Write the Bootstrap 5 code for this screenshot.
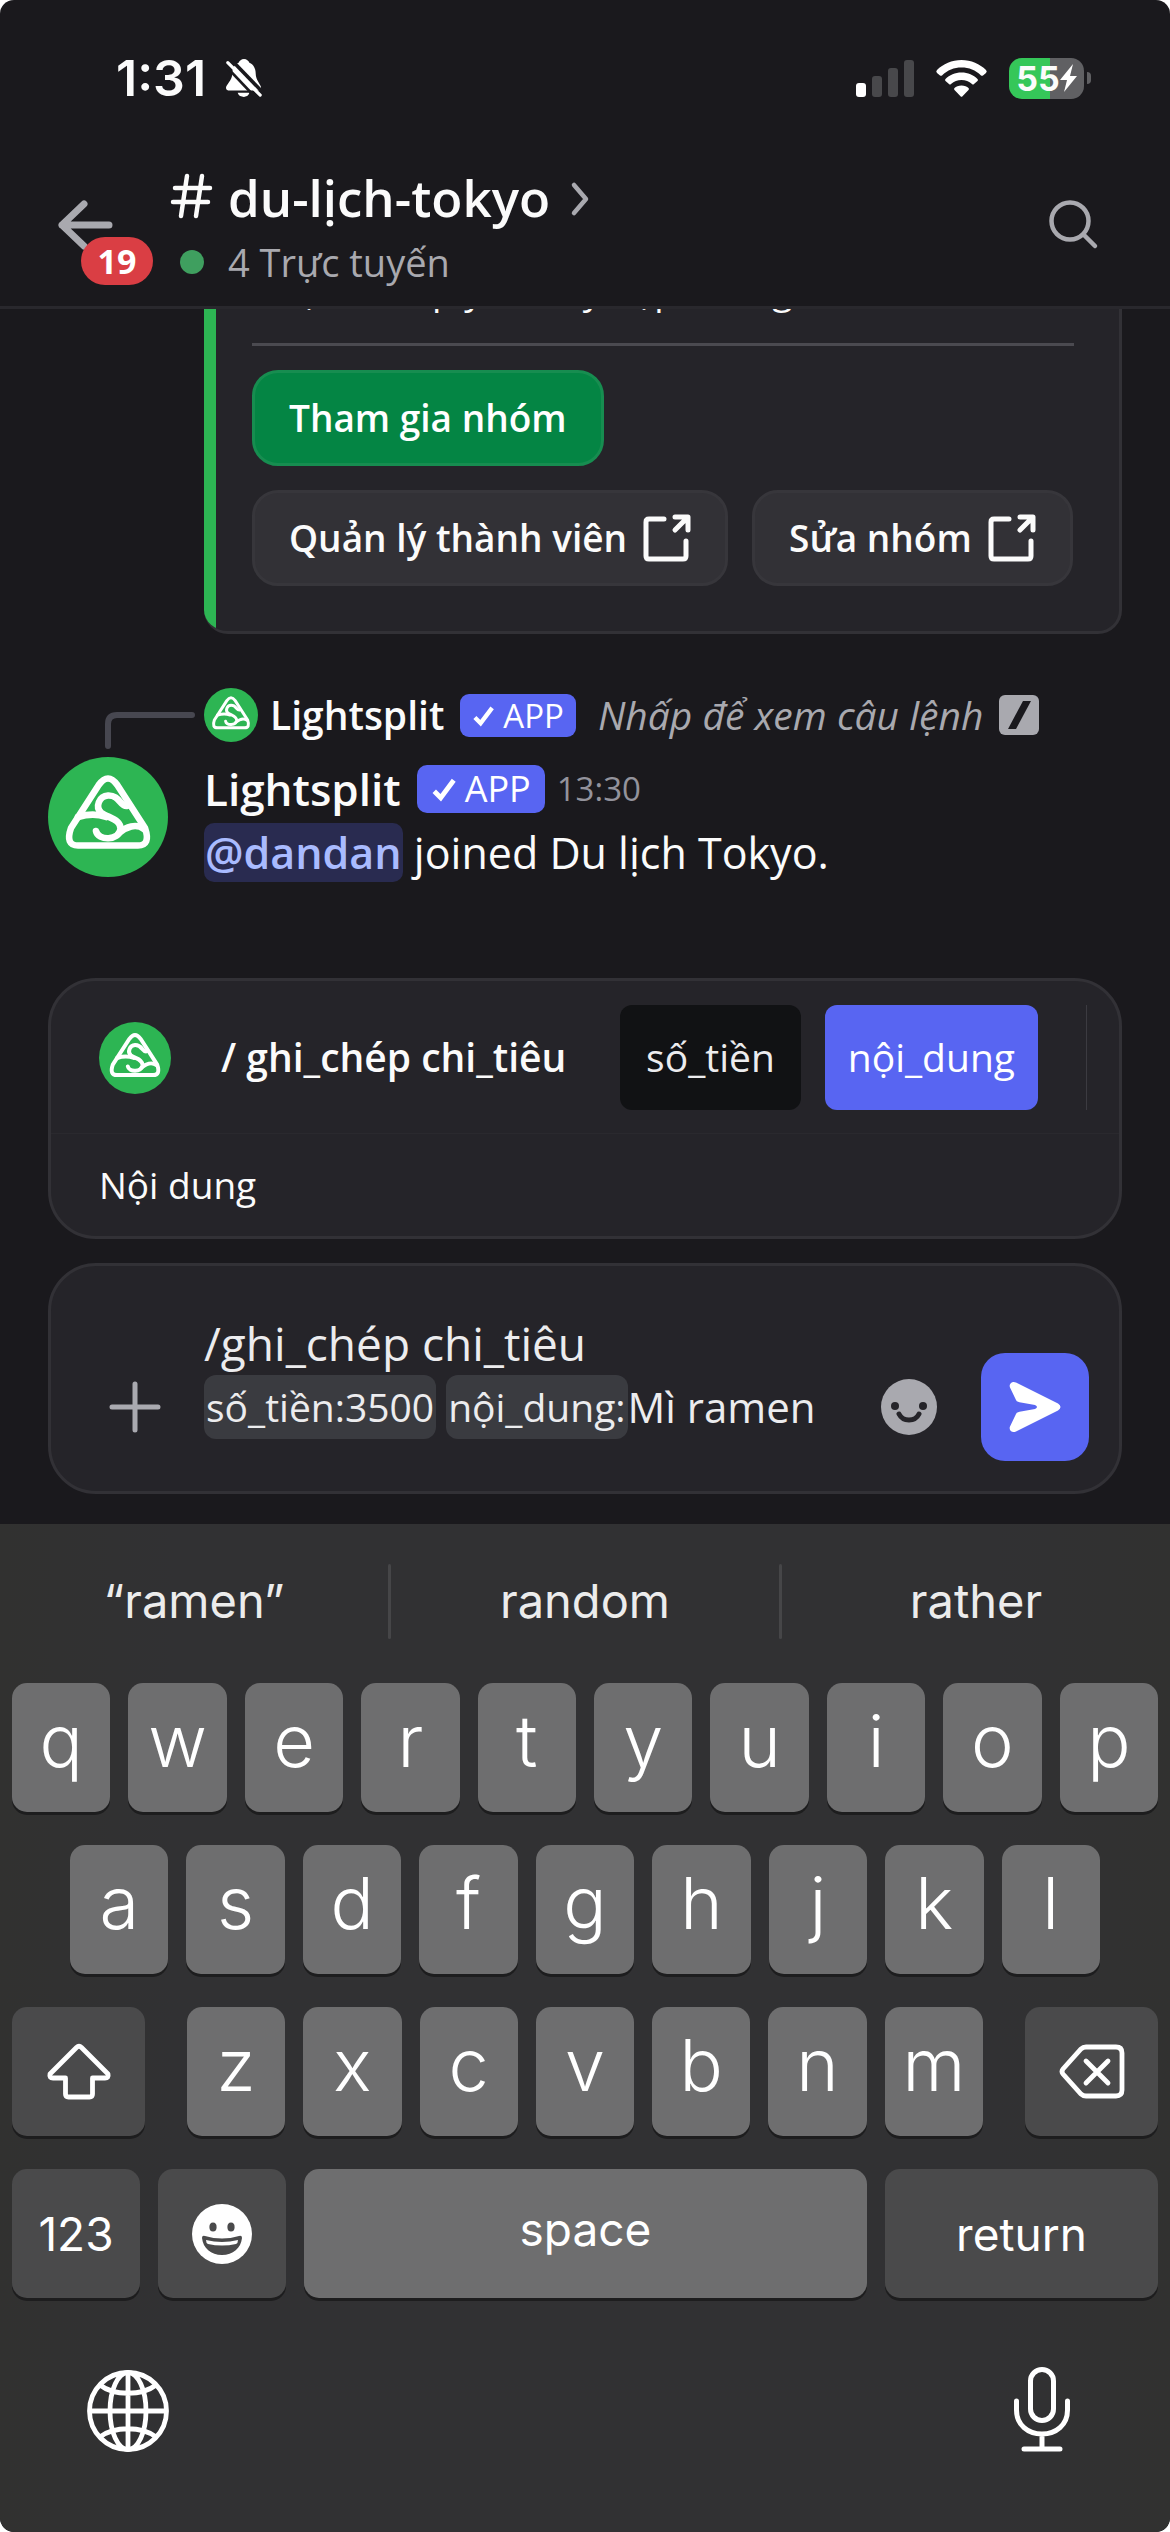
<!DOCTYPE html>
<html lang="vi">
<head>
<meta charset="utf-8">
<meta name="viewport" content="width=device-width, initial-scale=1">
<title>#du-lịch-tokyo</title>
<link href="https://cdn.jsdelivr.net/npm/bootstrap@5.3.0/dist/css/bootstrap.min.css" rel="stylesheet">
<style>
  :root { --chat: "Open Sans", "Noto Sans", sans-serif; --sys: Inter, Roboto, sans-serif; --panel: #252429; --blurple: #5865f2; --green: #2db553; --muted: #a9a9af; }
  body { background: #fff; font-family: var(--chat); color: #fbfbfb; }
  svg { display: block; flex: none; overflow: visible; }
  button { font-family: inherit; }
  .phone { background: #1a191d; border-radius: 14px; }
  .bare { background: none; border: 0; padding: 0; color: inherit; }

  /* status bar */
  .status { height: 156px; padding: 0 79px 0 116px; font-family: var(--sys); }
  .clock { font-size: 50px; font-weight: 600; line-height: 60px; }
  .wifi { margin: 0 22px; }
  .battery { width: 75px; height: 41px; border-radius: 13px; background: linear-gradient(90deg, #35c759 55%, #606063 55%); font-size: 34px; line-height: 41px; font-weight: 700; }
  .nub { width: 4px; height: 12px; border-radius: 0 4px 4px 0; background: #606063; margin-left: 3px; }

  /* channel header */
  .topbar { padding: 5px 73px 15px 58px; border-bottom: 3px solid #29282d; }
  .unread { top: 38px; left: 23px; width: 72px; height: 48px; border-radius: 24px; background: #da3e44; font-size: 34px; font-weight: 700; line-height: 48px; }
  .heading { margin-left: 60px; }
  .symbol-col { width: 56px; }
  .channel { font-size: 51px; line-height: 72px; font-weight: 600; margin: 0; }
  .chevron { margin-left: 22px; }
  .online { font-size: 38px; line-height: 58px; color: var(--muted); }
  .dot { width: 24px; height: 24px; border-radius: 50%; background: #3f9f5f; margin-left: 8px; }

  /* conversation */
  .chat { flex: 1 1 0; min-height: 0; padding: 0 48px 93px; }
  .embed { flex: none; margin: 0 0 54px 156px; border: 3px solid #323136; border-left: 0; border-radius: 24px; background: var(--panel); }
  .stripe { width: 12px; background: var(--green); }
  .embed-body { padding: 36px 45px 45px 36px; font-size: 37px; line-height: 50px; }
  .rule { height: 3px; margin: 28px 0 24px; background: #4b4a50; }
  .act { height: 96px; padding: 0 34px; border-radius: 26px; border: 3px solid #37363b; background: #323136; color: #fbfbfb; font-size: 37px; font-weight: 600; line-height: 50px; }
  .act-go { background: #048544; border-color: #178d50; color: #fff; }
  .reply { height: 54px; margin-left: 54px; margin-bottom: 15px; font-size: 39px; line-height: 54px; }
  .spine { margin-right: 6px; }
  .who { font-weight: 600; }
  .hint { color: var(--muted); margin: 0 16px 0 22px; }
  .tag { background: var(--blurple); border-radius: 9px; color: #fff; font-size: 33px; font-weight: 500; line-height: 43px; padding: 0 12px; gap: 8px; }
  .tag-lg { border-radius: 10px; font-size: 36px; line-height: 48px; padding: 0 14px; }
  .msg { gap: 36px; font-size: 43px; line-height: 64px; }
  .msg .who { font-size: 44px; }
  .time { font-size: 33px; color: #93939c; }
  .at { background: #292b50; color: #a9bbff; border-radius: 10px; font-weight: 600; text-decoration: none; padding: 0 1px; }

  /* command helper and composer */
  .panel { margin: 0 48px; border: 3px solid #323136; border-radius: 48px; background: var(--panel); }
  .helper { margin-bottom: 24px; font-size: 37px; }
  .helper-top { padding: 24px 32px 23px 48px; border-bottom: 1px solid #2a292e; }
  .cmd { font-size: 39px; font-weight: 600; margin-left: 50px; }
  .opt { height: 105px; border: 0; border-radius: 12px; padding: 0 26px; background: #111214; color: #ececee; font-size: 39px; font-weight: 500; }
  .opt-on { background: var(--blurple); color: #fff; padding: 0 23px; }
  .edge { width: 1px; height: 105px; background: #3c3b41; margin-left: 48px; }
  .helper-desc { padding: 0 48px; line-height: 102px; font-weight: 500; }
  .composer { margin-bottom: 30px; padding: 45px 30px 30px 48px; color: #ececee; }
  .tool { height: 108px; }
  .plus { width: 72px; margin-right: 33px; }
  .entry { margin-bottom: 22px; line-height: 64px; }
  .entry-cmd { font-size: 46px; }
  .pill { background: #3a3b40; border-radius: 12px; font-size: 39px; padding: 0 2px; }
  .pill-row { gap: 10px; }
  .entry input { background: none; border: 0; outline: 0; padding: 0; height: 64px; font-size: 42px; color: inherit; min-width: 0; }
  .send { width: 108px; border: 0; border-radius: 24px; background: var(--blurple); margin-left: 44px; }

  /* keyboard */
  .keyboard { background: linear-gradient(90deg, #313130, #313133 15%, #313133 85%, #313130); border-radius: 0 0 14px 14px; font-family: var(--sys); padding: 0 12px; }
  .suggest { height: 159px; margin: 0 -12px; padding-bottom: 4px; font-size: 47px; color: #ececec; }
  .bar { width: 3px; height: 75px; background: #464648; border-radius: 2px; }
  .keys { margin-bottom: 33px; }
  .keys, .keys-inner { gap: 18px; }
  .keys-mid { padding: 0 58px; }
  .keys-last { margin-bottom: 0; }
  .k { height: 129px; border: 0; border-radius: 15px; background: #6e6e6f; color: #fff; box-shadow: 0 3px 0 #1d1d1e; font-size: 72px; font-weight: 350; line-height: 72px; padding: 0 0 14px; flex: 1 1 0; min-width: 0; }
  .k-dark { background: #4a4a4b; padding: 0; font-size: 46px; font-weight: 400; flex: none; }
  .k-space { font-size: 46px; font-weight: 400; padding-bottom: 10px; }
  .w-side { width: 133px; } .w-num { width: 128px; } .w-ret { width: 273px; }
  .gap-side { gap: 42px; }
  .dock { height: 234px; padding: 0 99px 8px 86px; }
  .dock { padding: 0 88px 8px 75px; }
</style>
</head>
<body>
<svg width="0" height="0" class="position-absolute" aria-hidden="true">
  <symbol id="logo" viewBox="0 0 120 120">
    <circle cx="60" cy="60" r="60" fill="#2db553"/>
    <g fill="none" stroke="#fff" stroke-width="6.6" stroke-linecap="round" stroke-linejoin="round">
      <path d="M50.7 28Q60 15 69.3 28L97 71Q103 88.500 90 88.500H30Q17 88.500 23 71Z"/>
      <path d="M79 49C72 50 72 38 60 38.500C51 39 47 50 53 55.500C60 61 73 62 72.500 72C71 84 50 84 48 74"/>
      <path d="M30 60C40 57 50 57 58 60M71 76C78 70 88 66 96 72"/>
    </g>
  </symbol>
  <symbol id="tick" viewBox="0 0 24 24"><path d="M3 14l6 6L21 4" fill="none" stroke="#fff" stroke-width="4.500"/></symbol>
  <symbol id="out" viewBox="0 0 48 48"><path d="M21 5H6Q3 5 3 8V42Q3 45 6 45H40Q43 45 43 42V27M32 3H45V16M44 4L32 16" fill="none" stroke="#fbfbfb" stroke-width="5" stroke-linecap="round" stroke-linejoin="round"/></symbol>
</svg>

<div class="phone vh-100 d-flex flex-column overflow-hidden">
  <div class="status d-flex align-items-center">
    <span class="clock">1:31</span>
    <svg width="40" height="42" viewBox="0 0 40 42" class="ms-3 ps-1" role="img" aria-label="Im lặng">
      <path d="M20 0C23 0 25 2 26 4C31 6 33 11 33 16C33 24 39 28 39 32C39 34 38 35 36 35H4C2 35 0 34 0 32C0 28 7 24 7 16C7 11 9 6 14 4C15 2 17 0 20 0ZM13 37.500H26C25 41 22 42 20 42C17 42 14 41 13 37.500Z" fill="#fff"/>
      <path d="M5 0L41 37" stroke="#1a191d" stroke-width="4"/><path d="M-1 7L35 45" stroke="#1a191d" stroke-width="3"/>
      <path d="M2 4L38 40" stroke="#fff" stroke-width="3.500" stroke-linecap="round"/>
    </svg>
    <svg width="58" height="37" viewBox="0 0 58 37" class="ms-auto"><rect y="23" width="10" height="14" rx="3" fill="#fff"/><g fill="#48484b"><rect x="16" y="16" width="10" height="21" rx="3"/><rect x="32" y="8" width="10" height="29" rx="3"/><rect x="48" width="10" height="37" rx="3"/></g></svg>
    <svg class="wifi" width="51" height="37" viewBox="0 0 51 37" fill="#fff"><path d="M25.500 0C35 0 44 4 50 10Q51.500 11.500 50 13L47 15.500Q46 16 45 15.500C39.500 10 33 7.500 25.500 7.500S11.500 10 6 15.500Q5 16 4 15.500L1 13Q-.5 11.500 1 10C7 4 16 0 25.500 0Z"/><path d="M25.500 12.500C32 12.500 37.500 15 41.500 19Q42.500 20 41.500 21L38 24Q37 25 36 24C33 21.500 29.500 20 25.500 20S18 21.500 15 24Q14 25 13 24L9.500 21Q8.500 20 9.500 19C13.500 15 19 12.500 25.500 12.500Z"/><path d="M25.500 25.500C28.500 25.500 31 26.500 32.500 28Q33.500 29 32.500 30L26.500 36.300Q25.500 37.300 24.500 36.300L18.500 30Q17.500 29 18.500 28C20 26.500 22.500 25.500 25.500 25.500Z"/></svg>
    <div class="battery d-flex align-items-center justify-content-center"><span>55</span><svg width="17" height="28" viewBox="0 0 17 28"><path d="M13 0L0 16H7L4 28L17 12H10Z" fill="#fff"/></svg></div><div class="nub"></div>
  </div>

  <header class="topbar d-flex align-items-center">
    <button class="bare position-relative" aria-label="Quay lại, 19 chưa đọc">
      <svg width="54" height="54" viewBox="0 0 54 54"><path d="M26 5L4 26L26 47M4 26H51" fill="none" stroke="#a9a9af" stroke-width="7" stroke-linecap="round" stroke-linejoin="round"/></svg>
      <span class="unread position-absolute text-white text-center">19</span>
    </button>
    <div class="heading flex-grow-1">
      <div class="d-flex align-items-center">
        <div class="symbol-col"><svg width="40" height="42" viewBox="0 0 40 42"><path d="M15 0L9 40M30 0L24 40M3 12H38M1 26H36" fill="none" stroke="#fbfbfb" stroke-width="4.500" stroke-linecap="round"/></svg></div>
        <h1 class="channel">du-lịch-tokyo</h1>
        <svg width="17" height="32" viewBox="0 0 17 32" class="chevron"><path d="M2 4L14 18L2 32" fill="none" stroke="#a9a9af" stroke-width="4.500" stroke-linecap="round" stroke-linejoin="round"/></svg>
      </div>
      <div class="d-flex align-items-center online"><div class="symbol-col"><div class="dot"></div></div>4 Trực tuyến</div>
    </div>
    <button class="bare" aria-label="Tìm kiếm"><svg width="48" height="52" viewBox="0 0 48 52"><circle cx="21" cy="21" r="18.500" fill="none" stroke="#a9a9af" stroke-width="4.500"/><path d="M35 35L46 46" stroke="#a9a9af" stroke-width="4.500" stroke-linecap="round"/></svg></button>
  </header>

  <main class="chat d-flex flex-column justify-content-end overflow-hidden">
    <div class="embed d-flex overflow-hidden">
      <div class="stripe"></div>
      <div class="embed-body flex-grow-1">
        <div>Chọn tên quỹ từ nay nạp chung</div>
        <div class="rule"></div>
        <button class="act act-go d-block mb-4">Tham gia nhóm</button>
        <div class="d-flex gap-4">
          <button class="act d-flex align-items-center gap-3">Quản lý thành viên <svg width="48" height="48"><use href="#out"/></svg></button>
          <button class="act d-flex align-items-center gap-3">Sửa nhóm <svg width="48" height="48"><use href="#out"/></svg></button>
        </div>
      </div>
    </div>

    <div class="reply d-flex align-items-center">
      <svg class="spine" width="96" height="54" viewBox="0 0 96 54"><path d="M6 58V36Q6 27 15 27H90" fill="none" stroke="#474750" stroke-width="6" stroke-linecap="round"/></svg>
      <svg width="54" height="54"><use href="#logo"/></svg>
      <span class="who ms-2 ps-1">Lightsplit</span>
      <span class="tag d-flex align-items-center ms-3"><svg width="23" height="23"><use href="#tick"/></svg>APP</span>
      <em class="hint">Nhấp để xem câu lệnh</em>
      <svg width="40" height="40" viewBox="0 0 40 40"><rect width="40" height="40" rx="6" fill="#a9a9af"/><path d="M9 34L24 6H32L17 34Z" fill="#1a191d"/></svg>
    </div>

    <div class="msg d-flex">
      <svg width="120" height="120"><use href="#logo"/></svg>
      <div>
        <div class="d-flex align-items-center"><span class="who">Lightsplit</span><span class="tag tag-lg d-flex align-items-center ms-3"><svg width="26" height="26"><use href="#tick"/></svg>APP</span><span class="time ms-2 ps-1">13:30</span></div>
        <div><a href="#dandan" class="at">@dandan</a> joined Du lịch Tokyo.</div>
      </div>
    </div>
  </main>

  <section class="panel helper">
    <div class="helper-top d-flex align-items-center">
      <svg width="72" height="72"><use href="#logo"/></svg>
      <span class="cmd">/ ghi_chép chi_tiêu</span>
      <div class="ms-auto d-flex gap-4"><button class="opt">số_tiền</button><button class="opt opt-on">nội_dung</button></div>
      <div class="edge"></div>
    </div>
    <div class="helper-desc">Nội dung</div>
  </section>

  <form class="panel composer d-flex align-items-end">
    <button type="button" class="bare tool plus d-flex align-items-center justify-content-center" aria-label="Thêm"><svg width="50" height="50" viewBox="0 0 50 50"><path d="M25 2V48M2 25H48" stroke="#a9a9af" stroke-width="5" stroke-linecap="round"/></svg></button>
    <div class="entry flex-grow-1">
      <div class="entry-cmd">/ghi_chép chi_tiêu</div>
      <div class="d-flex pill-row"><span class="pill">số_tiền:3500</span><div class="d-flex flex-grow-1"><label class="pill" for="content">nội_dung:</label><input id="content" class="flex-grow-1" type="text" size="8" value="Mì ramen"></div></div>
    </div>
    <button type="button" class="bare tool d-flex align-items-center" aria-label="Biểu cảm"><svg width="56" height="56" viewBox="0 0 56 56"><circle cx="28" cy="28" r="28" fill="#a9a9af"/><g fill="#252429"><circle cx="14" cy="27" r="4"/><circle cx="42" cy="27" r="4"/></g><path d="M18 35C22 43 34 43 38 35" fill="none" stroke="#252429" stroke-width="5" stroke-linecap="round"/></svg></button>
    <button type="button" class="send tool d-flex align-items-center justify-content-center" aria-label="Gửi"><svg width="52" height="54" viewBox="0 0 52 54"><path d="M7 2.500L49 23.500Q54 27 49 30.500L7 51.500C3 53.500-.5 50 1 46.500L7 34Q8 32 10.500 31.700L26 29Q30 27 26 25L10.500 22.300Q8 22 7 20L1 7.500C-.5 4 3 .5 7 2.500Z" fill="#fff"/></svg></button>
  </form>

  <section class="keyboard">
    <div class="suggest d-flex align-items-center">
      <button class="bare flex-fill w-25">“ramen”</button><div class="bar"></div><button class="bare flex-fill w-25">random</button><div class="bar"></div><button class="bare flex-fill w-25">rather</button>
    </div>
    <div class="keys d-flex"><button class="k">q</button><button class="k">w</button><button class="k">e</button><button class="k">r</button><button class="k">t</button><button class="k">y</button><button class="k">u</button><button class="k">i</button><button class="k">o</button><button class="k">p</button></div>
    <div class="keys keys-mid d-flex"><button class="k">a</button><button class="k">s</button><button class="k">d</button><button class="k">f</button><button class="k">g</button><button class="k">h</button><button class="k">j</button><button class="k">k</button><button class="k">l</button></div>
    <div class="keys gap-side d-flex">
      <button class="k k-dark w-side d-flex align-items-center justify-content-center" aria-label="Shift"><svg width="64" height="56" viewBox="0 0 64 56"><path d="M29.500 3.500Q32 1 34.500 3.500L61 30Q62 34 58 34H45.500V50Q45.500 53 42.500 53H21.500Q18.500 53 18.500 50V34H6Q2 34 3 30Z" fill="none" stroke="#fff" stroke-width="4.800" stroke-linejoin="round"/></svg></button>
      <div class="keys-inner d-flex flex-fill"><button class="k">z</button><button class="k">x</button><button class="k">c</button><button class="k">v</button><button class="k">b</button><button class="k">n</button><button class="k">m</button></div>
      <button class="k k-dark w-side d-flex align-items-center justify-content-center" aria-label="Xóa"><svg width="66" height="56" viewBox="0 0 66 56"><path d="M27 3H57Q63 3 63 9V46Q63 52 57 52H27Q24 52 22 50L4 30Q2 27.500 4 25L22 5Q24 3 27 3ZM27 17L49 39M49 17L27 39" fill="none" stroke="#fff" stroke-width="4.800" stroke-linecap="round"/></svg></button>
    </div>
    <div class="keys keys-last d-flex">
      <button class="k k-dark w-num">123</button>
      <button class="k k-dark w-num d-flex align-items-center justify-content-center" aria-label="Emoji"><svg width="60" height="60" viewBox="0 0 60 60"><circle cx="30" cy="30" r="30" fill="#fff"/><g fill="#4a4a4b"><ellipse cx="21" cy="23" rx="3.600" ry="4.500"/><ellipse cx="39" cy="23" rx="3.600" ry="4.500"/><path d="M10 34Q10 31 13 32Q30 37 47 32Q50 31 50 34C49 44 41 51 30 51S11 44 10 34Z"/></g><path d="M14 36Q30 40 46 36Q46 39 44 40Q30 43 16 40Q14 39 14 36Z" fill="#fff"/></svg></button>
      <button class="k k-space">space</button>
      <button class="k k-dark w-ret">return</button>
    </div>
    <div class="dock d-flex align-items-center justify-content-between">
      <button class="bare" aria-label="Ngôn ngữ"><svg width="82" height="82" viewBox="0 0 82 82"><g fill="none" stroke="#fff" stroke-width="4.800"><circle cx="41" cy="41" r="38.500"/><ellipse cx="41" cy="41" rx="18" ry="38.500"/><path d="M41 2V80M2 41H80M13 15C27 26 55 26 69 15M13 67C27 56 55 56 69 67"/></g></svg></button>
      <button class="bare" aria-label="Đọc chính tả"><svg width="56" height="88" viewBox="0 0 56 88"><g fill="none" stroke="#fff" stroke-width="5" stroke-linecap="round"><rect x="16.500" y="2.500" width="23" height="51" rx="11.500"/><path d="M2.500 34V43C2.500 58 14 67 28 67S53.500 58 53.500 43V34M28 67V82M10 82H46"/></g></svg></button>
    </div>
  </section>
</div>
<script src="https://cdn.jsdelivr.net/npm/bootstrap@5.3.0/dist/js/bootstrap.bundle.min.js"></script>
</body>
</html>
